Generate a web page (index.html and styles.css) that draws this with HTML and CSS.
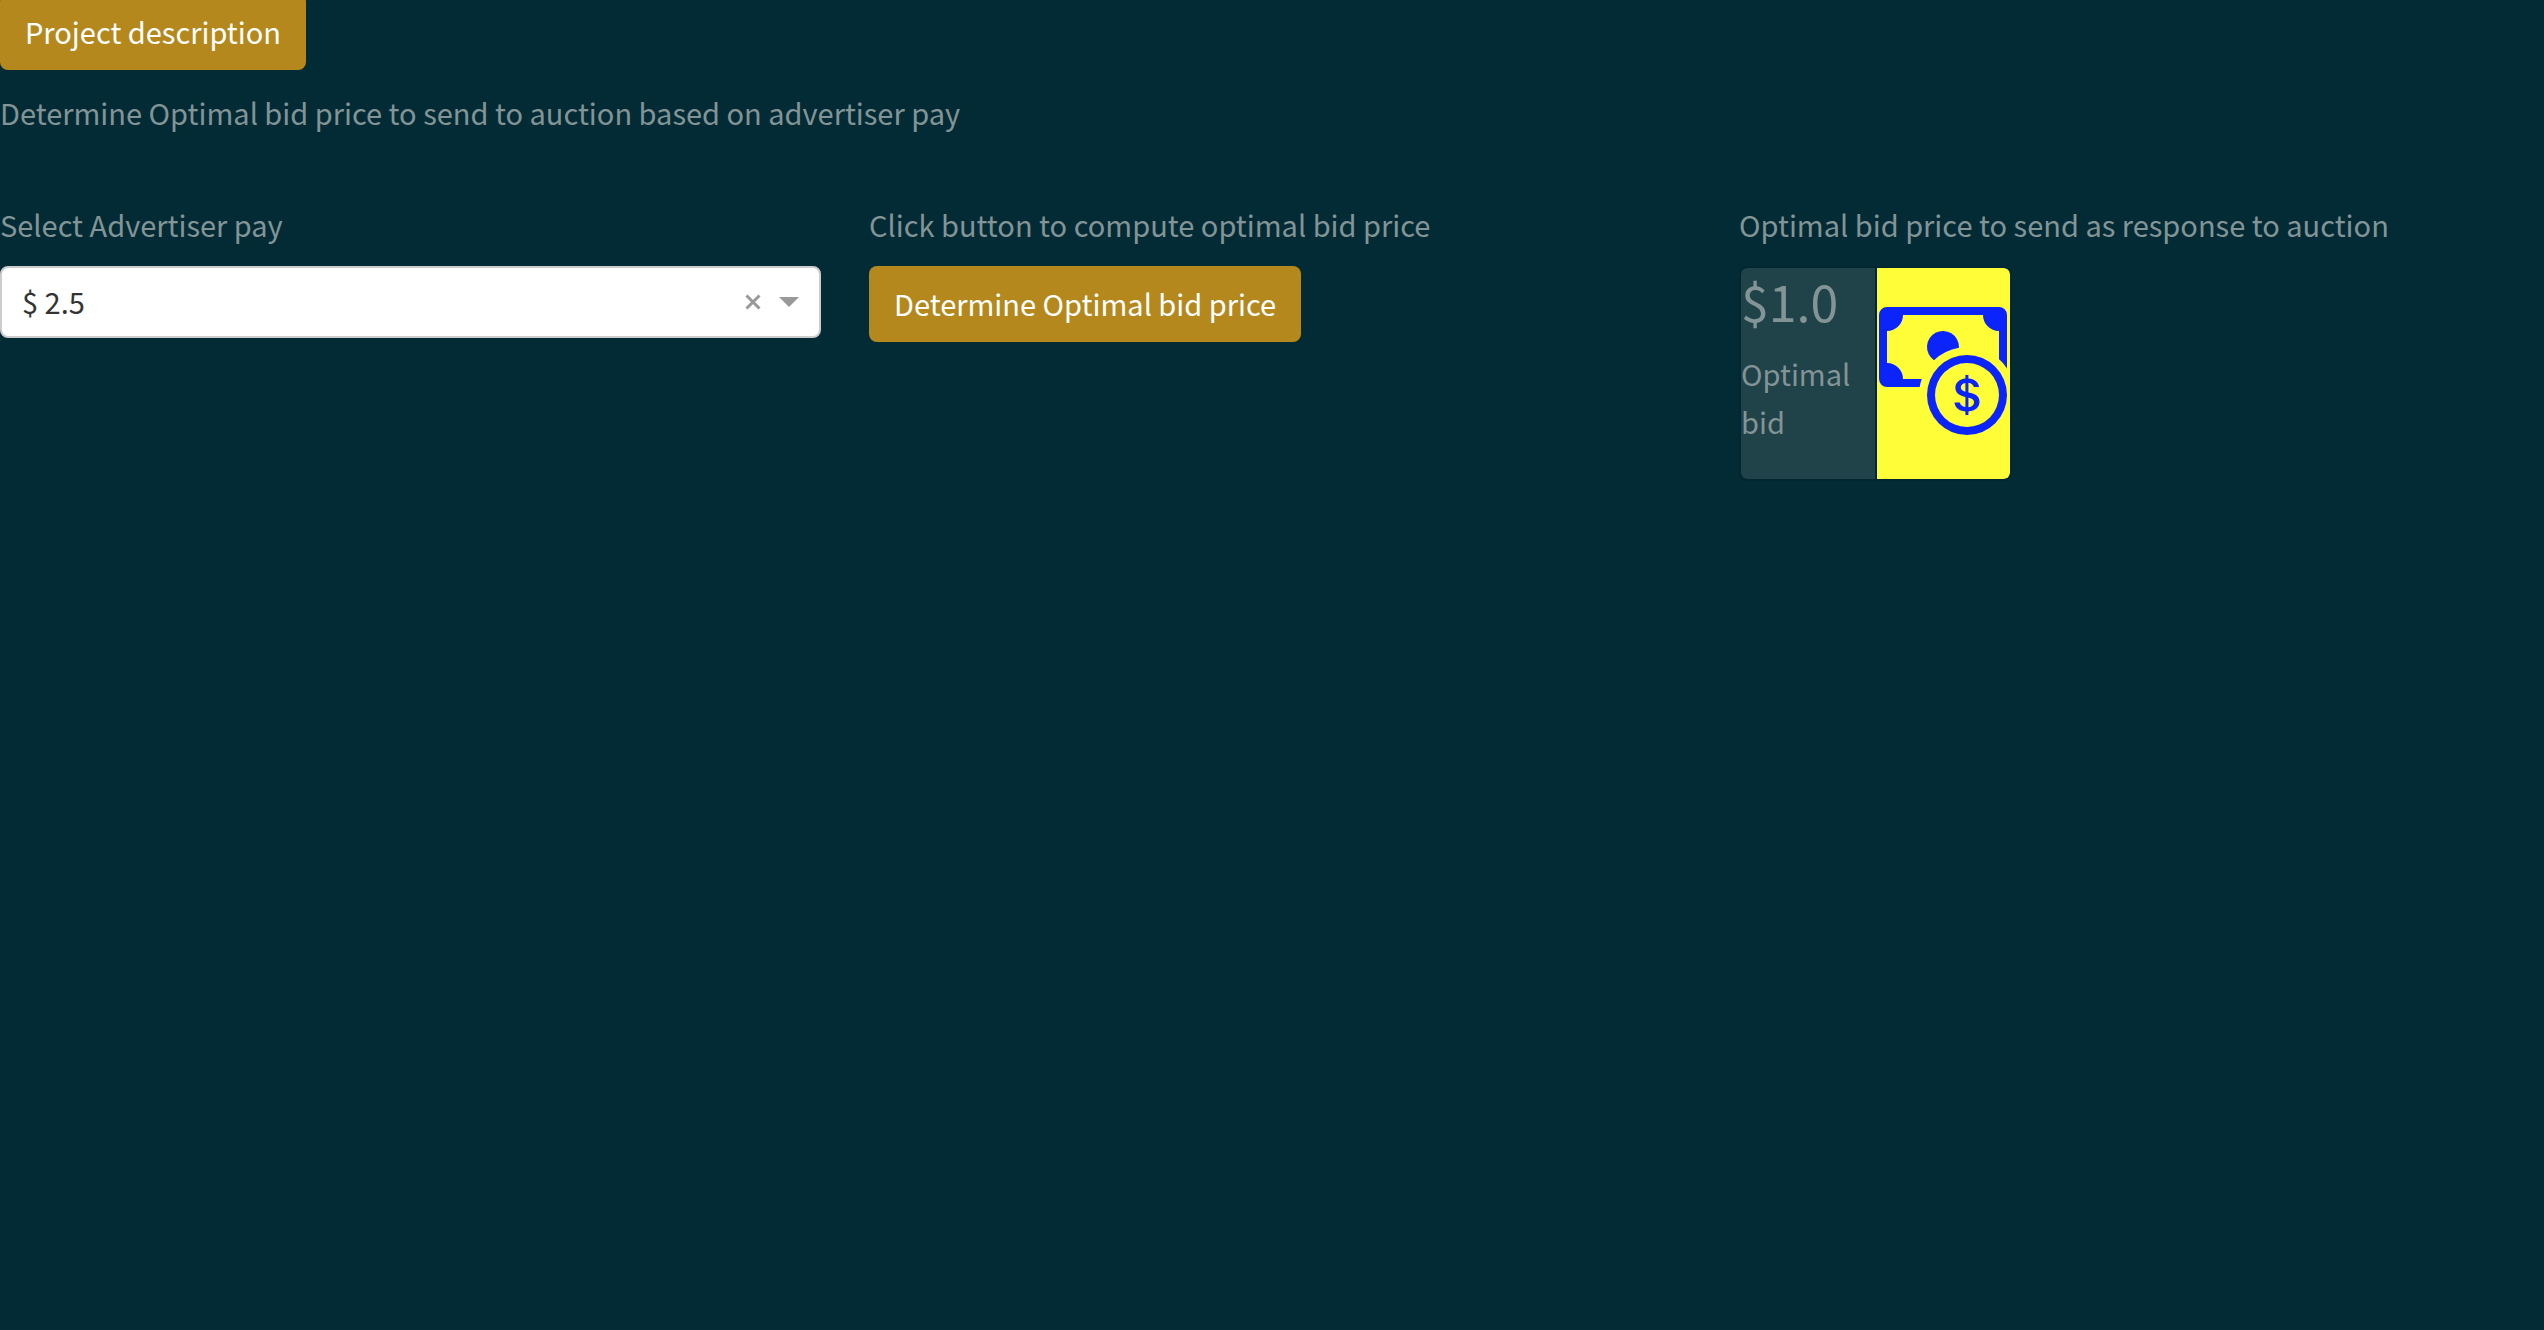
FILE: index.html
```html
<!DOCTYPE html>
<html lang="en">
<head>
<meta charset="utf-8">
<title>Optimal bid price</title>
<link rel="stylesheet" href="styles.css">
</head>
<body>
<main class="page">
  <button class="btn btn-description" type="button">Project description</button>
  <p class="intro">Determine Optimal bid price to send to auction based on advertiser pay</p>
  <div class="columns">
    <section class="column">
      <label class="label" for="pay">Select Advertiser pay</label>
      <div class="dropdown">
        <select class="dropdown-select" id="pay">
          <option>$ 2.5</option>
        </select>
        <div class="dropdown-tools">
          <button class="clear" type="button" aria-label="Clear value">
            <svg class="clear-icon" viewBox="0 0 16 16"><path d="M1.5 1.5l13 13M14.500 1.500L1.500 14.500"/></svg>
          </button>
          <span class="arrow"></span>
        </div>
      </div>
    </section>
    <section class="column">
      <p class="label">Click button to compute optimal bid price</p>
      <button class="btn" type="button">Determine Optimal bid price</button>
    </section>
    <section class="column">
      <p class="label">Optimal bid price to send as response to auction</p>
      <div class="card-group">
        <div class="card card-value">
          <h5 class="value">$1.0</h5>
          <p class="caption">Optimal bid</p>
        </div>
        <div class="card card-icon">
          <svg class="cash-icon" viewBox="0 0 16 16" aria-hidden="true">
            <path fill-rule="evenodd" d="M11 15a4 4 0 1 0 0-8 4 4 0 0 0 0 8m5-4a5 5 0 1 1-10 0 5 5 0 0 1 10 0"/>
            <path d="M9.438 11.944c.047.596.518 1.06 1.363 1.116v.44h.375v-.443c.875-.061 1.386-.529 1.386-1.207 0-.618-.39-.936-1.09-1.1l-.296-.07v-1.2c.376.043.614.248.671.532h.658c-.047-.575-.54-1.024-1.329-1.073V8.5h-.375v.45c-.747.073-1.255.522-1.255 1.158 0 .562.378.92 1.007 1.066l.248.061v1.272c-.384-.058-.639-.27-.696-.563h-.668zm1.36-1.354c-.369-.085-.569-.26-.569-.522 0-.294.216-.514.572-.578v1.1zm.432.746c.449.104.655.272.655.569 0 .339-.257.571-.709.614v-1.195z"/>
            <path d="M1 0a1 1 0 0 0-1 1v8a1 1 0 0 0 1 1h4.083q.088-.517.258-1H3a2 2 0 0 0-2-2V3a2 2 0 0 0 2-2h10a2 2 0 0 0 2 2v3.528c.38.34.717.728 1 1.154V1a1 1 0 0 0-1-1z"/>
            <path d="M9.998 5.083 10 5a2 2 0 1 0-3.132 1.65 6 6 0 0 1 3.13-1.567"/>
          </svg>
        </div>
      </div>
    </section>
  </div>
</main>
</body>
</html>
```
FILE: styles.css
```css
* {
  box-sizing: border-box;
}

body {
  margin: 0;
  min-height: 100vh;
  background: #032b35;
  color: #839496;
  font: 400 29px/48px "Noto Sans CJK JP", sans-serif;
}

p,
h5 {
  margin: 0;
}

.page {
  display: flow-root;
}

.btn {
  display: block;
  height: 76px;
  padding: 0 25px 3px;
  border: 0;
  border-radius: 8px;
  background: #b4881d;
  color: #fff;
  font: inherit;
}

.btn-description {
  margin-top: -6px;
}

.intro {
  margin: 18px 0 64px;
}

.columns {
  display: grid;
  grid-template-columns: 821fr 822fr 805fr;
  gap: 48px;
  align-items: start;
}

.label {
  display: block;
  margin-bottom: 18px;
}

.dropdown {
  position: relative;
}

.dropdown-select {
  display: block;
  width: 100%;
  height: 72px;
  padding: 0 20px 3px;
  border: 2px solid #ccc;
  border-radius: 8px;
  background: #fff;
  color: #333;
  font: inherit;
  appearance: none;
}

.dropdown-tools {
  position: absolute;
  inset: 0 22px 0 auto;
  display: flex;
  align-items: center;
  gap: 18px;
}

.clear {
  padding: 0;
  border: 0;
  background: none;
}

.clear-icon {
  display: block;
  width: 16px;
  height: 16px;
  stroke: #999;
  stroke-width: 3;
}

.arrow {
  border: 10px solid transparent;
  border-top-color: #999;
  border-bottom: 0;
}

.card-group {
  display: flex;
  width: 273px;
}

.card {
  flex: 1;
  height: 215px;
  border: 2px solid #022731;
  background-clip: padding-box;
}

.card-value {
  border-right-width: 1px;
  border-radius: 8px 0 0 8px;
  background-color: #204249;
}

.card-icon {
  display: flex;
  justify-content: center;
  padding-top: 39px;
  border-left-width: 1px;
  border-radius: 0 8px 8px 0;
  background-color: #fffd38;
}

.value {
  font-size: 50px;
  font-weight: 400;
  line-height: 64px;
}

.caption {
  margin-top: 17px;
}

.cash-icon {
  width: 128px;
  height: 128px;
  fill: #0b24fb;
}
```
